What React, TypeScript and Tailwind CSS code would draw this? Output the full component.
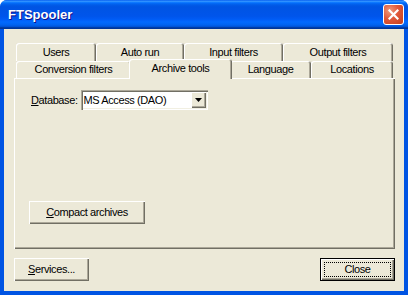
const raised =
  "shadow-[inset_1px_1px_#ffffff,inset_-1px_-1px_#716F64,inset_-2px_-2px_#ACA899]";

interface TabProps {
  label: string;
  width: string;
  selected?: boolean;
}

const Tab = ({ label, width, selected }: TabProps) => {
  return (
    <div
      className={`${width} flex shrink-0 items-center justify-center rounded-t-[3px] bg-[#ECE9D8] shadow-[inset_1px_1px_#ffffff,inset_-1px_0_#716F64,inset_-2px_0_#ACA899] ${
        selected
          ? "relative z-10 -mx-[2px] -mb-[1px] h-[20px] pb-[1px]"
          : "h-full"
      }`}
    >
      {label}
    </div>
  );
};

const Button = ({
  children,
  width,
  isDefault,
}: {
  children: React.ReactNode;
  width: string;
  isDefault?: boolean;
}) => {
  if (isDefault) {
    return (
      <div className={`${width} h-[23px] border border-black bg-[#ECE9D8]`}>
        <div className={`flex h-full items-center justify-center p-[3px] ${raised}`}>
          <div className="flex h-full w-full items-center justify-center border border-dotted border-black">
            {children}
          </div>
        </div>
      </div>
    );
  }
  return (
    <div
      className={`${width} flex h-[23px] items-center justify-center bg-[#ECE9D8] ${raised}`}
    >
      {children}
    </div>
  );
};

export default function App() {
  return (
    <div className="h-[295px] w-[408px] bg-white font-['Liberation_Sans',Arial,sans-serif] text-[11px] tracking-[-0.4px] text-black">
      <div className="flex h-full flex-col overflow-hidden rounded-t-[7px] bg-[#0054E3]">
        {/* title bar */}
        <div className="flex h-[29px] shrink-0 items-center justify-between bg-[linear-gradient(to_bottom,#0058EE_0%,#3593FF_4%,#288EFF_6%,#127DFF_8%,#036FFC_10%,#0262EE_14%,#0057E5_20%,#0054E3_24%,#0055EB_56%,#005BF5_66%,#026AFE_76%,#0062EF_86%,#0052D6_92%,#0040AB_94%,#003092_100%)] pl-[8px] pr-[4px]">
          <span className="text-[13px] font-bold tracking-normal text-white [text-shadow:1px_1px_#0F1089]">
            FTSpooler
          </span>
          <div className="flex h-[21px] w-[21px] items-center justify-center rounded-[3px] border border-white bg-[radial-gradient(circle_at_30%_30%,#F09A7C_0%,#E0583A_45%,#C43E1A_100%)]">
            <svg width="11" height="11" viewBox="0 0 11 11">
              <path
                d="M1.5 1.5 L9.5 9.5 M9.5 1.5 L1.5 9.5"
                stroke="#ffffff"
                strokeWidth="2.2"
                strokeLinecap="square"
              />
            </svg>
          </div>
        </div>

        {/* body */}
        <div className="mx-[4px] mb-[4px] flex flex-1 flex-col bg-[#ECE9D8] pb-[10px] pl-[10px] pr-[9px] pt-[14px]">
          {/* tabs */}
          <div className="ml-[2px] flex h-[18px]">
            <Tab label="Users" width="w-[80px]" />
            <Tab label="Auto run" width="w-[88px]" />
            <Tab label="Input filters" width="w-[99px]" />
            <Tab label="Output filters" width="w-[110px]" />
          </div>
          <div className="relative z-10 ml-[2px] flex h-[17px] items-end">
            <Tab label="Conversion filters" width="w-[115px]" />
            <Tab label="Archive tools" width="w-[103px]" selected />
            <Tab label="Language" width="w-[81px]" />
            <Tab label="Locations" width="w-[82px]" />
          </div>

          {/* panel */}
          <div className="flex h-[171px] flex-col bg-[#ECE9D8] pb-[25px] pl-[15px] pt-[12px] shadow-[inset_1px_1px_#ffffff,inset_-1px_-1px_#716F64,inset_-2px_-2px_#ACA899]">
            <div className="flex items-center">
              <span className="ml-[2px] mr-[3px]">
                <span className="underline">D</span>atabase:
              </span>
              <div className="flex h-[20px] w-[127px] items-center bg-white shadow-[inset_1px_1px_#ACA899,inset_2px_2px_#716F64,inset_-1px_-1px_#ffffff,inset_-2px_-2px_#F1EFE2]">
                <span className="flex-1 pl-[3px]">MS Access (DAO)</span>
                <div
                  className={`mr-[2px] flex h-[16px] w-[15px] items-center justify-center bg-[#ECE9D8] ${raised}`}
                >
                  <svg width="7" height="4" viewBox="0 0 7 4">
                    <path d="M0 0 H7 L3.5 4 Z" fill="#000000" />
                  </svg>
                </div>
              </div>
            </div>
            <div className="mt-auto">
              <Button width="w-[116px]">
                <span>
                  <span className="underline">C</span>ompact archives
                </span>
              </Button>
            </div>
          </div>

          {/* footer */}
          <div className="mt-[9px] flex justify-between">
            <Button width="w-[75px]">
              <span>
                <span className="underline">S</span>ervices...
              </span>
            </Button>
            <Button width="w-[75px]" isDefault>
              Close
            </Button>
          </div>
        </div>
      </div>
    </div>
  );
}
